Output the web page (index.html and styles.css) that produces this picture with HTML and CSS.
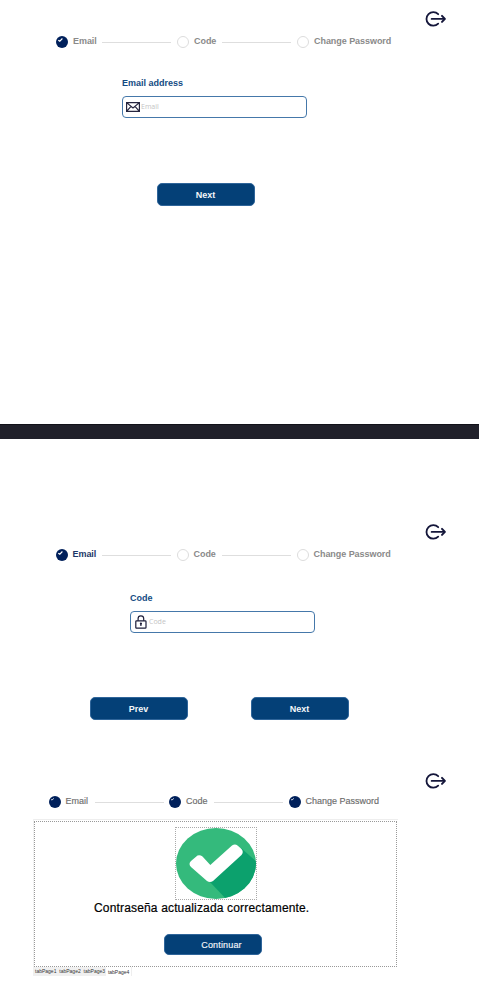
FILE: index.html
```html
<!DOCTYPE html>
<html lang="en">
<head>
<meta charset="utf-8">
<title>Password recovery</title>
<link rel="stylesheet" href="styles.css">
</head>
<body>
<svg class="symbols" aria-hidden="true">
  <symbol id="exit" viewBox="0 0 22 16">
    <path d="M13.2 3.2A6.8 6.8 0 1 0 13.2 12.6" fill="none" stroke="#14163a" stroke-width="1.8" stroke-linecap="round"/>
    <path d="M6.600 7.900H19" fill="none" stroke="#14163a" stroke-width="1.7" stroke-linecap="round"/>
    <path d="M17 4.900L19.900 7.900L17 10.900" fill="none" stroke="#14163a" stroke-width="2" stroke-linecap="round" stroke-linejoin="round"/>
  </symbol>
  <symbol id="done" viewBox="0 0 12 12">
    <circle cx="6" cy="6" r="6" fill="#00205b"/>
    <path d="M2.3 4.2L3.8 5.2L6.4 2.5" fill="none" stroke="#fff" stroke-width="1.1"/>
  </symbol>
  <symbol id="done-small" viewBox="0 0 12 12">
    <circle cx="6" cy="6" r="6" fill="#00205b"/>
    <path d="M2 3.5L3 4L4.9 2.4" fill="none" stroke="#fff" stroke-width=".8"/>
  </symbol>
  <symbol id="todo" viewBox="0 0 12 12">
    <circle cx="6" cy="6" r="5.5" fill="#fff" stroke="#dcdcdc"/>
  </symbol>
</svg>

<section class="screen screen-email">
  <svg class="exit"><use href="#exit"/></svg>
  <div class="stepper">
    <svg class="dot"><use href="#done"/></svg><span class="step">Email</span><i class="line"></i>
    <svg class="dot"><use href="#todo"/></svg><span class="step">Code</span><i class="line"></i>
    <svg class="dot"><use href="#todo"/></svg><span class="step">Change Password</span>
  </div>
  <div class="field">
    <label class="label" for="email">Email address</label>
    <div class="box">
      <svg class="mail" viewBox="0 0 14 10" fill="none" stroke="#25253f" stroke-width="1.2"><path d="M.6 .6H13.4V9.4H.6ZM.6 .6L7 6L13.4 .6M.6 9.4L5 4.4M13.4 9.4L9 4.4"/></svg>
      <input id="email" class="input" placeholder="Email">
    </div>
  </div>
  <button class="button">Next</button>
</section>

<div class="divider"></div>

<section class="screen screen-code">
  <svg class="exit"><use href="#exit"/></svg>
  <div class="stepper">
    <svg class="dot"><use href="#done"/></svg><span class="step current">Email</span><i class="line"></i>
    <svg class="dot"><use href="#todo"/></svg><span class="step">Code</span><i class="line"></i>
    <svg class="dot"><use href="#todo"/></svg><span class="step">Change Password</span>
  </div>
  <div class="field">
    <label class="label" for="code">Code</label>
    <div class="box">
      <svg class="lock" viewBox="0 0 12 14" fill="none" stroke="#1c1c38" stroke-width="1.2"><rect x=".8" y="5.8" width="10.2" height="7.4" rx=".8"/><path d="M3.1 5.8V3.6a2.8 2.8 0 0 1 5.6 0V5.8M5.9 8V11"/><circle cx="5.9" cy="8.6" r=".5"/></svg>
      <input id="code" class="input" placeholder="Code">
    </div>
  </div>
  <div class="actions">
    <button class="button">Prev</button>
    <button class="button">Next</button>
  </div>
</section>

<section class="screen screen-done">
  <svg class="exit"><use href="#exit"/></svg>
  <div class="stepper light">
    <svg class="dot"><use href="#done-small"/></svg><span class="step">Email</span><i class="line"></i>
    <svg class="dot"><use href="#done-small"/></svg><span class="step">Code</span><i class="line"></i>
    <svg class="dot"><use href="#done-small"/></svg><span class="step">Change Password</span>
  </div>
  <div class="frame">
    <div class="page">
      <svg class="success" viewBox="0 0 80 71" preserveAspectRatio="none">
        <defs><clipPath id="disc"><ellipse cx="40" cy="35.5" rx="40" ry="35.5"/></clipPath></defs>
        <g clip-path="url(#disc)">
          <rect width="80" height="71" fill="#34ba7c"/>
          <path d="M33 53L65 20L82 35V73H52Z" fill="#0ca16d"/>
        </g>
        <path d="M15 33L21.500 27.500Q24 26.500 26.500 28.500L34.300 37L56 17.500Q59 15.500 61.500 17.500L65.500 21Q68 24 65.500 27L37 53Q34 55 31 53L15 39Q12 36 15 33Z" fill="#fff"/>
      </svg>
      <p class="message">Contraseña actualizada correctamente.</p>
      <button class="button">Continuar</button>
    </div>
  </div>
  <div class="tabs">
    <span class="tab">tabPage1</span><span class="tab">tabPage2</span><span class="tab">tabPage3</span><span class="tab active">tabPage4</span>
  </div>
</section>
</body>
</html>
```
FILE: styles.css
```css
* { box-sizing: border-box; }

body {
  margin: 0;
  width: 479px;
  height: 994px;
  overflow: hidden;
  background: #fff;
  font-family: "Liberation Sans", Arial, sans-serif;
}

svg { display: block; }
.symbols { position: absolute; width: 0; height: 0; }

.screen { display: flow-root; }
.screen-email { height: 424px; padding-top: 11px; }
.screen-code { height: 326px; padding-top: 85px; }
.screen-done { height: 229px; padding-top: 8px; }

.divider {
  height: 15px;
  background: #20202a;
  border-top: 1px solid #111119;
}

.exit { width: 22px; height: 16px; margin-left: 425px; }
.screen-code .exit,
.screen-done .exit { margin-left: 424.5px; }

.stepper {
  display: grid;
  grid-template-columns: 12px 34px 69px 18px 33px 69px 18px 100px;
  height: 12px;
  margin: 9px 0 0 56px;
  align-items: center;
}
.screen-code .stepper { margin: 9px 0 0 55.5px; }
.screen-done .stepper { grid-template-columns: 12px 34px 69px 17.5px 33px 69px 17.5px 100px; margin: 7px 0 0 48.5px; }

.dot { width: 12px; height: 12px; justify-self: end; }

.step {
  padding-left: 5px;
  font-size: 9px;
  line-height: 10px;
  font-weight: 700;
  letter-spacing: -.05px;
  color: #8a8a8a;
  white-space: nowrap;
  margin-top: -3px;
}
.step.current { color: #1d3768; }
.light .step { font-weight: 400; letter-spacing: 0; color: #6c6c6c; -webkit-text-stroke: .15px #6c6c6c; }

.line { height: 1px; margin-top: 1px; background: #dedede; }

.field { width: 185px; margin: 30px 0 0 122px; }
.screen-code .field { margin: 32px 0 0 130px; }

.label {
  display: block;
  height: 13px;
  font-size: 9px;
  line-height: 11px;
  font-weight: 700;
  color: #134b83;
}

.box {
  display: flex;
  align-items: center;
  height: 22px;
  margin-top: 5px;
  padding-left: 3px;
  border: 1px solid #4578aa;
  border-radius: 4px;
}

.mail { width: 14px; height: 10px; }
.lock { width: 12px; height: 14px; margin-left: 1px; }

.input {
  width: 140px;
  padding: 0;
  border: 0;
  outline: 0;
  background: none;
  font: 7px/10px "Open Sans", sans-serif;
  margin-left: 1px;
}
.screen-code .input { margin-left: 2px; }
.input::placeholder { color: #c4c4c4; opacity: 1; }

.button {
  display: block;
  width: 98px;
  height: 23px;
  padding: 0;
  border: 1px solid #2f659a;
  border-radius: 5px;
  background: #044077;
  color: #f4f7fa;
  font: 700 9px/20px "Liberation Sans", Arial, sans-serif;
}
.screen-email .button { margin: 65px 0 0 156.5px; }

.actions { display: flex; gap: 63px; margin: 64px 0 0 89.5px; }

.frame {
  width: 365px;
  height: 148px;
  margin: 11px 0 0 33px;
  padding-top: 1px;
  border-top: 1px solid #eee;
  border-left: 1px solid #f2f2f2;
}

.page {
  width: 363px;
  height: 146px;
  padding-top: 5px;
  border: 1px dotted #999;
}

.success {
  width: 82px;
  height: 73px;
  margin-left: 140px;
  border: 1px dotted #aaa;
}

.message {
  margin: 1px 0 0 59px;
  font-size: 12px;
  line-height: 15px;
  letter-spacing: .16px;
  color: #000;
  -webkit-text-stroke: .2px #000;
  white-space: nowrap;
}

.page .button {
  height: 21px;
  margin: 18px 0 0 129px;
  padding-left: 17px;
  font-weight: 400;
  letter-spacing: .15px;
  -webkit-text-stroke: .15px #f4f7fa;
}

.tabs { display: flex; height: 9px; margin-left: 33px; }

.tab {
  width: 24.3px;
  padding-left: 2px;
  background: #f0f0f0;
  color: #333;
  font-size: 5px;
  line-height: 8px;
  white-space: nowrap;
}
.tab.active { width: 26px; background: #fff; border-right: 1px solid #eee; line-height: 10px; }
```
